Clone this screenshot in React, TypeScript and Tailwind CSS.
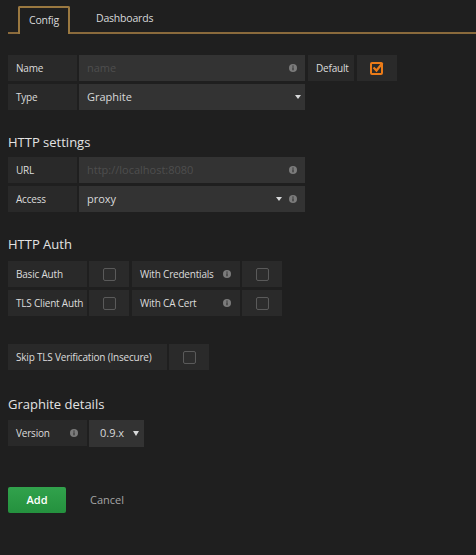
import React from 'react';

const font = { fontFamily: '"Open Sans", "Liberation Sans", sans-serif' };

function Info(): React.JSX.Element {
  return (
    <svg width="8" height="8" viewBox="0 0 8 8" className="shrink-0">
      <circle cx="4" cy="4" r="4" fill="#7b7b7b" />
      <rect x="3.4" y="3.3" width="1.2" height="3" fill="#333" />
      <rect x="3.4" y="1.5" width="1.2" height="1.2" fill="#333" />
    </svg>
  );
}

function Caret(): React.JSX.Element {
  return (
    <svg width="6" height="4" viewBox="0 0 6 4" className="shrink-0">
      <path d="M0 0h6L3 4z" fill="#d8d9da" />
    </svg>
  );
}

function Label(props: { text: string; w: string; info?: boolean }): React.JSX.Element {
  return (
    <div
      className={`flex h-[26px] items-center justify-between bg-[#292929] pr-[9px] pl-[8px] text-[10px] tracking-[-0.2px] whitespace-nowrap text-[#dcdcdc] ${props.w}`}
    >
      <span>{props.text}</span>
      {props.info && <Info />}
    </div>
  );
}

function Check(props: { checked?: boolean }): React.JSX.Element {
  return (
    <div className="flex h-[26px] w-[40px] items-center justify-center bg-[#2a2a2a]">
      {props.checked ? (
        <svg width="14" height="14" viewBox="0 0 14 14">
          <rect x="1" y="2" width="11" height="11" rx="1" fill="none" stroke="#eb7b18" strokeWidth="2" />
          <path d="M3.5 6.5l3 3 6-7.5" fill="none" stroke="#eb7b18" strokeWidth="2.2" />
        </svg>
      ) : (
        <div className="h-[13px] w-[13px] rounded-[2px] border border-[#5a5a5a] bg-[#2d2d2d]" />
      )}
    </div>
  );
}

function Input(props: {
  text: string;
  placeholder?: boolean;
  caret?: boolean;
  info?: boolean;
  w: string;
}): React.JSX.Element {
  return (
    <div
      className={`flex h-[26px] items-center gap-[7px] bg-[#333333] pl-[8px] ${props.info ? 'pr-[8px]' : 'pr-[4px]'} ${props.w}`}
    >
      <span
        className={`flex-1 text-[11px] ${props.placeholder ? 'text-[#4e4e4e]' : 'text-[#d8d9da]'}`}
      >
        {props.text}
      </span>
      {props.caret && <Caret />}
      {props.info && <Info />}
    </div>
  );
}

function Heading(props: { text: string; className: string }): React.JSX.Element {
  return (
    <h3 className={`text-[13px] leading-[18px] text-[#e3e3e3] ${props.className}`}>
      {props.text}
    </h3>
  );
}

export default function App(): React.JSX.Element {
  return (
    <div style={font} className="h-[555px] w-[476px] overflow-hidden bg-[#1f1f1f] pl-[8px]">
      <div className="flex h-[34px] items-end border-b-2 border-[#8a6a3c] pt-[7px]">
        <div className="-mb-[2px] ml-[10px] flex h-[28px] w-[52px] items-center justify-center rounded-t-[2px] border-2 border-b-0 border-[#9a7840] bg-[#1f1f1f] text-[10.5px] tracking-[-0.2px] text-[#d8d9da]">
          Config
        </div>
        <div className="ml-[26px] flex h-[26px] items-center text-[10.5px] tracking-[-0.2px] text-[#d8d9da]">
          Dashboards
        </div>
      </div>

      <div className="mt-[21px] flex flex-col gap-[3px]">
        <div className="flex gap-[2px]">
          <Label text="Name" w="w-[69px]" />
          <Input text="name" placeholder info w="w-[226px]" />
          <div className="ml-[1px]">
            <Label text="Default" w="w-[46px]" />
          </div>
          <div className="ml-[1px]">
            <Check checked />
          </div>
        </div>
        <div className="flex gap-[2px]">
          <Label text="Type" w="w-[69px]" />
          <Input text="Graphite" caret w="w-[226px]" />
        </div>
      </div>

      <Heading text="HTTP settings" className="mt-[23px] mb-[6px]" />
      <div className="flex flex-col gap-[3px]">
        <div className="flex gap-[2px]">
          <Label text="URL" w="w-[69px]" />
          <Input text="http://localhost:8080" placeholder info w="w-[226px]" />
        </div>
        <div className="flex gap-[2px]">
          <Label text="Access" w="w-[69px]" />
          <Input text="proxy" caret info w="w-[226px]" />
        </div>
      </div>

      <Heading text="HTTP Auth" className="mt-[23px] mb-[8px]" />
      <div className="flex flex-col gap-[3px]">
        <div className="flex gap-[2px]">
          <Label text="Basic Auth" w="w-[79px]" />
          <Check />
          <div className="ml-[1px]">
            <Label text="With Credentials" info w="w-[108px]" />
          </div>
          <Check />
        </div>
        <div className="flex gap-[2px]">
          <Label text="TLS Client Auth" w="w-[79px]" />
          <Check />
          <div className="ml-[1px]">
            <Label text="With CA Cert" info w="w-[108px]" />
          </div>
          <Check />
        </div>
      </div>

      <div className="mt-[28px] flex gap-[2px]">
        <Label text="Skip TLS Verification (Insecure)" w="w-[159px]" />
        <Check />
      </div>

      <Heading text="Graphite details" className="mt-[25px] mb-[7px]" />
      <div className="flex gap-[2px]">
        <Label text="Version" info w="w-[79px]" />
        <div className="flex h-[27px] w-[55px] items-center justify-between bg-[#333333] pr-[5px] pl-[11px] text-[11px] text-[#d8d9da]">
          <span>0.9.x</span>
          <svg width="6" height="5" viewBox="0 0 6 5">
            <path d="M0 0h6L3 5z" fill="#d8d9da" />
          </svg>
        </div>
      </div>

      <div className="mt-[40px] flex items-center">
        <button className="h-[26px] w-[58px] rounded-[2px] bg-gradient-to-b from-[#31a24c] to-[#24913e] text-[11px] font-semibold text-white">
          Add
        </button>
        <span className="ml-[24px] text-[11px] text-[#a5a5a5]">Cancel</span>
      </div>
    </div>
  );
}
